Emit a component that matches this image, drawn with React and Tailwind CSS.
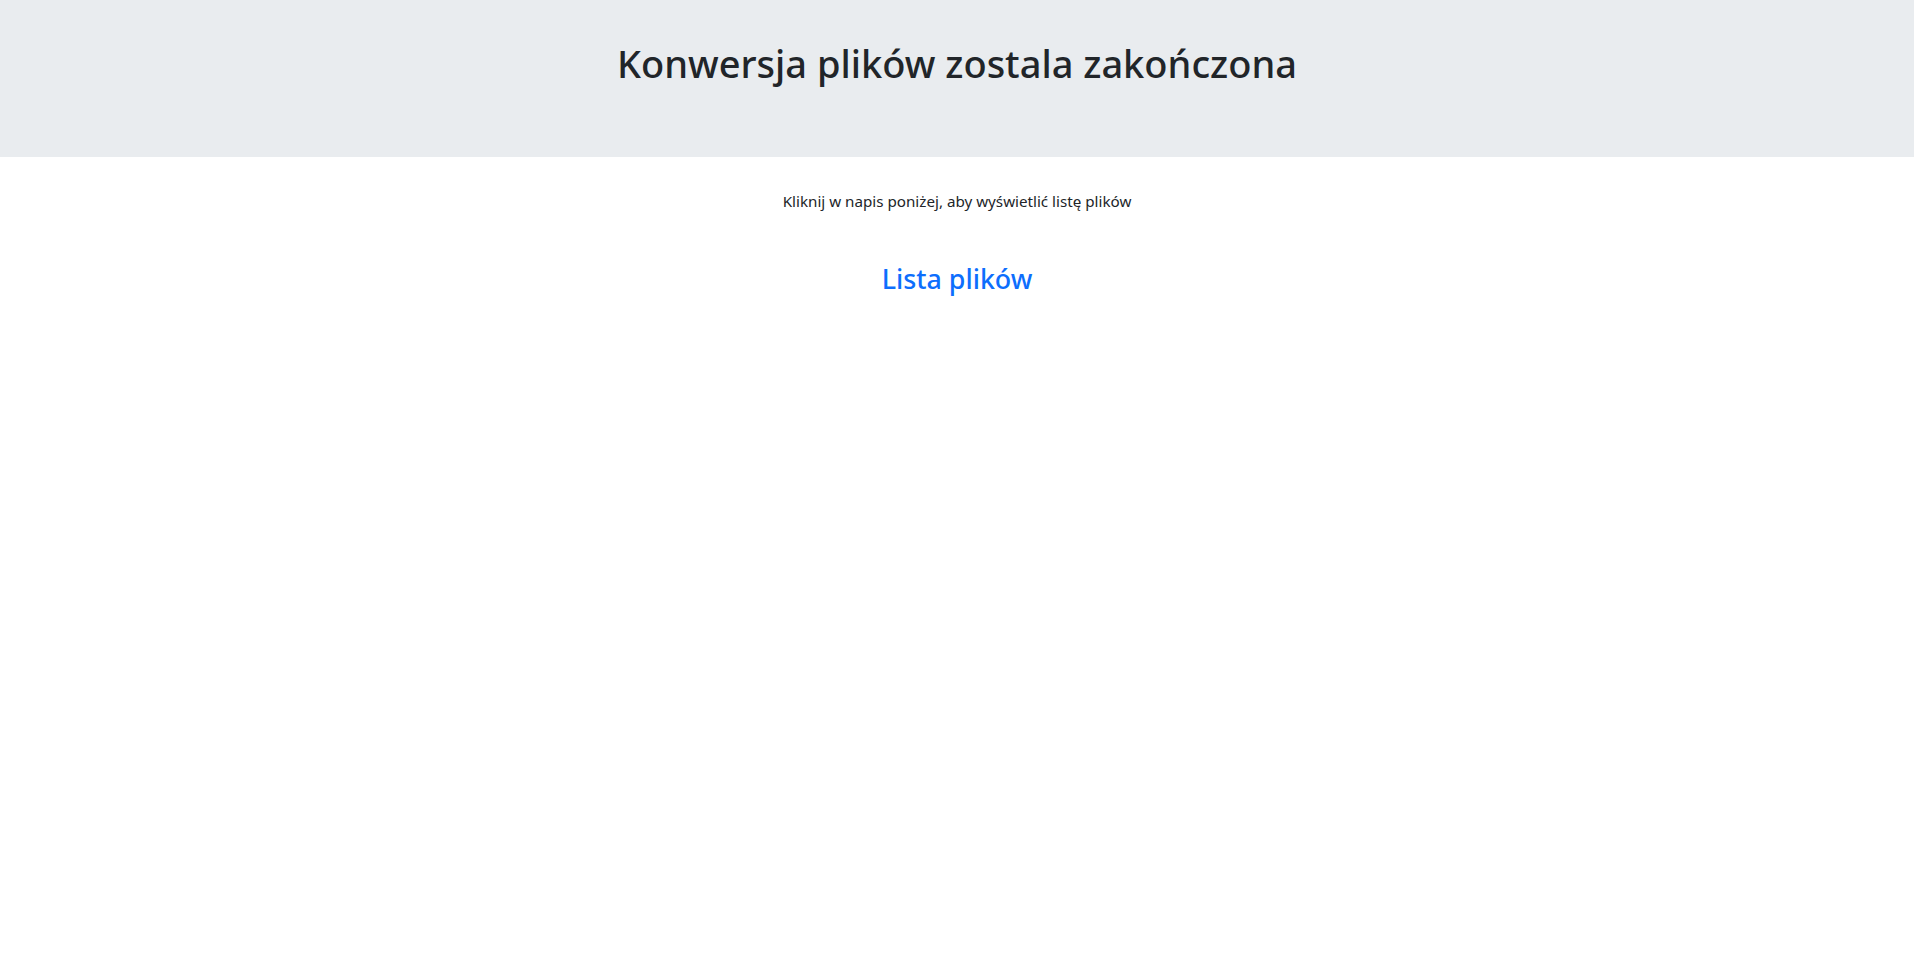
import React from 'react';

function App() {
    return (
        <div className="min-h-screen bg-white text-[#212529]" style={{ fontFamily: '"Noto Sans", "Open Sans", sans-serif' }}>
            {/* Header */}
            <header className="h-[157px] bg-[#e9ecef] pt-[39px] text-center">
                <h1 className="text-[38px] leading-[48px] font-medium">Konwersja plików zostala zakończona</h1>
            </header>

            {/* Content */}
            <main className="pt-[32px] text-center">
                <p className="text-[15.2px] leading-6">Kliknij w napis poniżej, aby wyświetlić listę plików</p>
                <h3 className="mt-[49px] text-[26.8px] leading-[34px] font-medium">
                    <a href="#files" className="text-[#0d6efd]">Lista plików</a>
                </h3>
            </main>
        </div>
    );
}

export default App;
